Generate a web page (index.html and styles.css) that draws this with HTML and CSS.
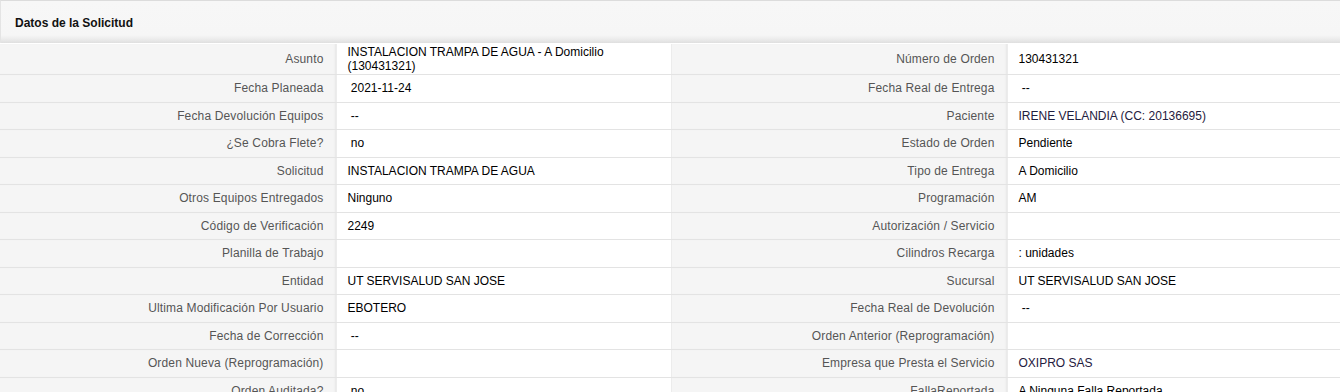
FILE: index.html
```html
<!DOCTYPE html>
<html lang="es">
<head>
<meta charset="utf-8">
<title>Datos de la Solicitud</title>
<link rel="stylesheet" href="styles.css">
</head>
<body>
<div class="panel">
  <div class="panel-head"><h3 class="panel-title">Datos de la Solicitud</h3></div>
  <table class="details">
    <colgroup>
      <col class="c-label"><col class="c-value"><col class="c-label"><col class="c-value2">
    </colgroup>
    <tbody>
      <tr class="first"><td class="lbl">Asunto</td><td class="val">INSTALACION TRAMPA DE AGUA - A Domicilio (130431321)</td><td class="lbl">Número de Orden</td><td class="val">130431321</td></tr>
      <tr><td class="lbl">Fecha Planeada</td><td class="val">&nbsp;2021-11-24</td><td class="lbl">Fecha Real de Entrega</td><td class="val">&nbsp;--</td></tr>
      <tr><td class="lbl">Fecha Devolución Equipos</td><td class="val">&nbsp;--</td><td class="lbl">Paciente</td><td class="val link">IRENE VELANDIA (CC: 20136695)</td></tr>
      <tr><td class="lbl">¿Se Cobra Flete?</td><td class="val">&nbsp;no</td><td class="lbl">Estado de Orden</td><td class="val">Pendiente</td></tr>
      <tr><td class="lbl">Solicitud</td><td class="val">INSTALACION TRAMPA DE AGUA</td><td class="lbl">Tipo de Entrega</td><td class="val">A Domicilio</td></tr>
      <tr><td class="lbl">Otros Equipos Entregados</td><td class="val">Ninguno</td><td class="lbl">Programación</td><td class="val">AM</td></tr>
      <tr><td class="lbl">Código de Verificación</td><td class="val">2249</td><td class="lbl">Autorización / Servicio</td><td class="val"></td></tr>
      <tr><td class="lbl">Planilla de Trabajo</td><td class="val"></td><td class="lbl">Cilindros Recarga</td><td class="val">: unidades</td></tr>
      <tr><td class="lbl">Entidad</td><td class="val">UT SERVISALUD SAN JOSE</td><td class="lbl">Sucursal</td><td class="val">UT SERVISALUD SAN JOSE</td></tr>
      <tr><td class="lbl">Ultima Modificación Por Usuario</td><td class="val">EBOTERO</td><td class="lbl">Fecha Real de Devolución</td><td class="val">&nbsp;--</td></tr>
      <tr><td class="lbl">Fecha de Corrección</td><td class="val">&nbsp;--</td><td class="lbl">Orden Anterior (Reprogramación)</td><td class="val"></td></tr>
      <tr><td class="lbl">Orden Nueva (Reprogramación)</td><td class="val"></td><td class="lbl">Empresa que Presta el Servicio</td><td class="val link">OXIPRO SAS</td></tr>
      <tr><td class="lbl">Orden Auditada?</td><td class="val">&nbsp;no</td><td class="lbl">FallaReportada</td><td class="val">A Ninguna Falla Reportada</td></tr>
    </tbody>
  </table>
</div>
</body>
</html>
```

FILE: styles.css
```css
html, body {
  margin: 0;
  padding: 0;
  background: #ffffff;
}
body {
  font-family: "Liberation Sans", Arial, sans-serif;
  font-size: 12px;
  color: #000;
}
.panel {
  width: 1340px;
}
.panel-head {
  height: 43px;
  box-sizing: border-box;
  border-top: 1px solid #dcdcdc;
  border-left: 1px solid #e4e4e4;
  background: linear-gradient(to bottom, #f7f7f7 0, #f6f6f6 34px, #ececec 38px, #dcdcdc 43px);
  padding: 0 0 0 14px;
  display: flex;
  align-items: center;
}
.panel-title {
  margin: 0;
  font-size: 12px;
  font-weight: bold;
  color: #111;
  padding-top: 1px;
}
.details {
  width: 1340px;
  table-layout: fixed;
  border-collapse: collapse;
  margin-top: 1px;
}
.c-label { width: 336px; }
.c-value { width: 335px; }
.c-value2 { width: 333px; }
.details td {
  height: 26.5px;
  padding: 0 10px 0 11px;
  line-height: 14px;
  vertical-align: middle;
  border-bottom: 1px solid #e3e3e3;
  overflow: hidden;
}
.details tr.first td {
  padding-top: 1px;
  padding-bottom: 1px;
}
.details td.lbl {
  background: #f5f5f5;
  color: #555;
  text-align: right;
  padding-right: 12px;
  padding-left: 8px;
  border-right: 1px solid #ececec;
  box-shadow: inset -2px 0 2px -1px #e6e6e6;
  letter-spacing: 0.15px;
}
.details td.val {
  background: #fff;
  color: #000;
  border-right: 1px solid #ececec;
}
.details td.val:last-child {
  border-right: none;
}
.details td.link {
  color: #1f2040;
}
```
